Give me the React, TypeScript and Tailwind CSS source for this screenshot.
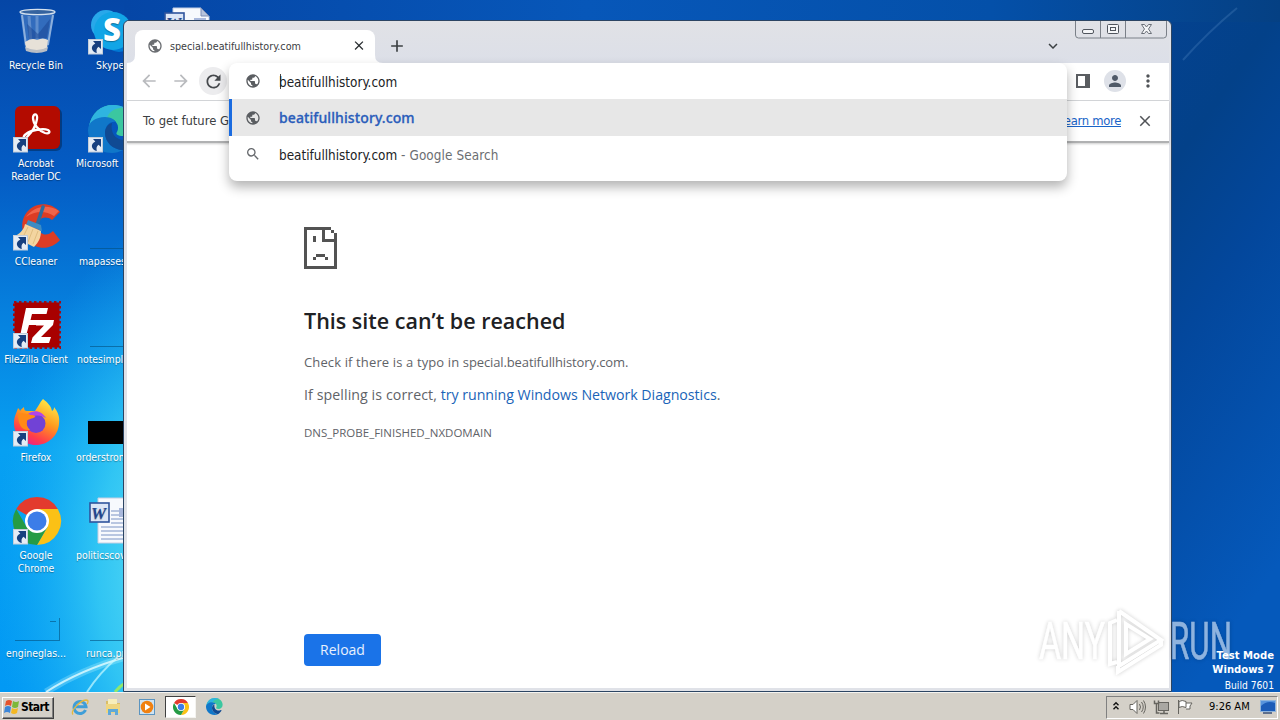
import type { ReactNode } from "react";
import {
  MdAdd,
  MdArrowBack,
  MdArrowForward,
  MdClose,
  MdExpandMore,
  MdMoreVert,
  MdPerson,
  MdPublic,
  MdRefresh,
  MdSearch,
} from "react-icons/md";

type IconProps = { children?: ReactNode; shortcut?: boolean };

/** 48px desktop icon with the optional shortcut arrow in the corner. */
function DeskIcon({ children, shortcut }: IconProps) {
  return (
    <svg viewBox="0 0 48 48" className="w-12 h-12 overflow-visible shrink-0">
      {children}
      {shortcut && (
        <g>
          <rect x="0.5" y="32.5" width="14" height="14.5" fill="#e4ecf5" stroke="#c3cdd9" />
          <path
            d="M5 34h8v8l-2.500-2.300c-2 1.700-2.300 3.200-1.700 6.300-5-1-7.300-6.500-1.500-9.500z"
            fill="#17407f"
          />
        </g>
      )}
    </svg>
  );
}

function RecycleBin() {
  return (
    <DeskIcon>
      <path d="M7 4 12 41q11 6 23 0l7-37z" fill="#5f8fd0" fillOpacity=".5" />
      <path d="M9 8l4 30M40 8l-5 30" stroke="#c8dcf2" strokeOpacity=".6" strokeWidth="2" />
      <path d="M16 9l2 26M24 9v24" stroke="#c8dcf2" strokeOpacity=".3" strokeWidth="3" />
      <path d="M14 17l11 10 12-15-3 19-18 1z" fill="#17428f" fillOpacity=".5" />
      <path d="M12 35q7-5 12-2 6-3 11 0l-1 8q-10 5-21 0z" fill="#e7e1d8" />
      <path d="M12 40q12 6 23 0l-1 4q-10 4-21 0z" fill="#b9bec5" />
      <ellipse cx="24.500" cy="5" rx="17.500" ry="2.600" fill="#35639f" stroke="#d6e2ee" strokeWidth="1.300" />
    </DeskIcon>
  );
}

function Acrobat() {
  return (
    <DeskIcon shortcut>
      <rect x="3" y="3" width="46" height="43" rx="6" fill="#000" opacity=".3" />
      <rect x="2" y="1" width="45" height="43" rx="6" fill="#b30b00" />
      <path
        d="M20 13c0-5 5-5 4 1-1 7-6 14-10 18-3 3-5 0-1-3 5-4 17-6 22-4 3 2 1 4-3 3-6-2-12-9-12-15z"
        fill="none"
        stroke="#fff"
        strokeWidth="2.300"
      />
    </DeskIcon>
  );
}

function CCleaner() {
  return (
    <DeskIcon shortcut>
      <path
        d="M47 9C36-3 19 0 12 12c-6 10-2 26 10 31 9 4 19 1 25-6l-7-9c-6 6-13 4-15-3-2-8 6-14 14-8z"
        fill="#dc3c24"
      />
      <path d="M13 14C20 4 34 0 46 8l-5 5c-9-6-19-5-28 1z" fill="#f0644a" />
      <path d="M30 4l-6 18" stroke="#2b6c9f" strokeWidth="3.500" strokeLinecap="round" />
      <path d="M15 17l13 5 1 6-16-6z" fill="#3c8cc4" />
      <path d="M12 21l16 7c0 6-2 11-7 16L1 34c5-3 10-7 11-13z" fill="#f3d5a0" />
      <path d="M15 24L9 36M20 26l-5 13M25 28l-5 13" stroke="#dfbd80" strokeWidth="1" />
    </DeskIcon>
  );
}

function FileZilla() {
  return (
    <DeskIcon shortcut>
      <rect x="1" y="1" width="46" height="46" fill="none" stroke="#a00a14" strokeWidth="2" strokeDasharray="2.500 2.500" />
      <rect x="1.500" y="1.500" width="45" height="45" fill="#a80000" />
      <path d="M13 7h22l-1.500 6H19l-1.500 6H30l-1.400 5H16l-3 11H7z" fill="#fff" />
      <path d="M24 19h17l-1 5-12 12h10l-2 6H18l1.500-5.500L31 24.500h-8z" fill="#fff" />
    </DeskIcon>
  );
}

function Firefox() {
  return (
    <DeskIcon shortcut>
      <defs>
        <linearGradient id="fox" x1=".8" y1="0" x2=".3" y2="1">
          <stop offset="0" stopColor="#fff04a" />
          <stop offset=".45" stopColor="#ff9a1e" />
          <stop offset=".8" stopColor="#ff3d4a" />
          <stop offset="1" stopColor="#e8208c" />
        </linearGradient>
      </defs>
      <path
        d="M30 0c5 4 8 7 9 12 2-1 2-3 2-4 4 5 6 10 5 17-1 12-11 21-23 21C10 46 1 36 1 24c0-7 3-11 4-15 1 1 2 2 2 3 1-2 3-3 4-4 0 3 1 4 3 4h8c3-4 5-9 8-12z"
        fill="url(#fox)"
      />
      <circle cx="23" cy="24.500" r="9.500" fill="#7142d6" />
      <path d="M15 15c6-5 14-3 18 4-5-3-9-3-14-2z" fill="#b244e8" />
      <path d="M5 15c5-2 10 0 13 1 3 0 5 1 4 2-3 2-7 2-8 4-1 3 0 6 3 9-8 1-12-5-12-16z" fill="#ff8a16" />
    </DeskIcon>
  );
}

function ChromeMark() {
  return (
    <>
      <path d="M24 24 3.200 12A24 24 0 0 1 44.800 12z" fill="#e33b2e" />
      <path d="M24 12h20.800A24 24 0 0 1 24 48L34.400 30z" fill="#fbc116" />
      <path d="M3.200 12A24 24 0 0 0 24 48l10.400-18H13.600z" fill="#259b45" />
      <circle cx="24" cy="24" r="12" fill="#fff" />
      <circle cx="24" cy="24" r="9.500" fill="#3c7de8" />
    </>
  );
}

function Skype() {
  return (
    <DeskIcon shortcut>
      <circle cx="18" cy="18" r="15" fill="#28a8ea" />
      <circle cx="31" cy="30" r="15" fill="#0078d4" />
      <circle cx="25" cy="24" r="19" fill="#12a5e6" />
      <text x="15" y="34" fontFamily="Open Sans, sans-serif" fontWeight="800" fontSize="31" fill="#fff">
        S
      </text>
    </DeskIcon>
  );
}

function EdgeMark() {
  return (
    <>
      <path d="M1 22C3 8 13 0 25 0c13 0 22 9 22 19 0 7-5 12-12 12-5 0-8-2-6-4 3-5 0-14-11-14C10 13 4 16 1 22z" fill="#3bc7a0" />
      <path d="M1 22C3 8 13 0 25 0c5 0 9 1 12 3-8-1-16 3-18 10C10 13 4 16 1 22z" fill="#2fb4e0" />
      <path d="M0 25c0-8 8-13 17-13 6 0 10 3 11 5-6-1-11 4-11 11 0 9 8 17 18 17-4 2-7 3-11 3C10 48 0 37 0 25z" fill="#1077c9" />
      <path d="M17 28c0-5 3-9 7-10-2 9 3 17 12 17 4 0 7-2 8-1-1 5-6 9-9 11-10 0-18-8-18-17z" fill="#104a93" />
    </>
  );
}

function WordDoc() {
  return (
    <DeskIcon>
      <path d="M10 1h28l8 8v37H10z" fill="#f7f9fd" stroke="#c4cee2" />
      <path d="M38 1v8h8z" fill="#b6c3dc" stroke="#7c8eb5" />
      <path d="M23 14h20M23 18h20M23 22h20M23 26h20M13 30h30M13 34h30M13 38h30M13 42h30" stroke="#7b93c4" />
      <rect x="31" y="11" width="12" height="9" fill="#a9b8dc" />
      <rect x="2" y="6" width="19" height="19" fill="#dbe5f6" stroke="#2f549d" strokeWidth="1.600" />
      <text x="3" y="21.500" fontFamily="Liberation Serif, serif" fontWeight="bold" fontStyle="italic" fontSize="17" fill="#21458f">
        W
      </text>
    </DeskIcon>
  );
}

function BlankFile({ corner }: { corner?: boolean }) {
  return (
    <DeskIcon>
      <path d="M2 45.500h45" stroke="#04507f" strokeOpacity=".6" />
      {corner && <path d="M46.500 23v22M37 26.500h6" stroke="#04507f" strokeOpacity=".6" />}
    </DeskIcon>
  );
}

const firstColumn = [
  { label: "Recycle Bin", icon: <RecycleBin /> },
  { label: "Acrobat Reader DC", icon: <Acrobat /> },
  { label: "CCleaner", icon: <CCleaner /> },
  { label: "FileZilla Client", icon: <FileZilla /> },
  { label: "Firefox", icon: <Firefox /> },
  { label: "Google Chrome", icon: <DeskIcon shortcut><ChromeMark /></DeskIcon> },
  { label: "engineglas...", icon: <BlankFile corner /> },
];

const secondColumn = [
  { label: "Skype", pad: "pl-[21px]", icon: <Skype /> },
  { label: "Microsoft", pad: "pl-[1px]", icon: <DeskIcon shortcut><EdgeMark /></DeskIcon> },
  { label: "mapasses", pad: "pl-1", icon: <BlankFile /> },
  { label: "notesimpl", pad: "pl-0.5", icon: <BlankFile /> },
  {
    label: "orderstrom",
    pad: "pl-[1px]",
    icon: (
      <DeskIcon>
        <rect y="22" width="48" height="23" fill="#000" />
      </DeskIcon>
    ),
  },
  { label: "politicscov", pad: "pl-[1px]", icon: <WordDoc /> },
  { label: "runca.png", pad: "pl-[11px]", icon: <BlankFile /> },
];

function Wallpaper() {
  return (
    <svg viewBox="0 0 1280 692" preserveAspectRatio="none" className="absolute inset-0 w-full h-full">
      <defs>
        <linearGradient id="sky" x1="0" y1="0" x2="0" y2="1">
          <stop offset="0" stopColor="#0546a6" />
          <stop offset=".25" stopColor="#045cc4" />
          <stop offset=".45" stopColor="#0680de" />
          <stop offset=".65" stopColor="#07a0f2" />
          <stop offset="1" stopColor="#0299f4" />
        </linearGradient>
        <radialGradient id="glow" gradientUnits="userSpaceOnUse" cx="200" cy="570" r="360" gradientTransform="translate(200 570) scale(.57 1) translate(-200 -570)">
          <stop offset="0" stopColor="#7cf0f4" stopOpacity=".95" />
          <stop offset=".5" stopColor="#3fd2f4" stopOpacity=".75" />
          <stop offset="1" stopColor="#18b0f4" stopOpacity="0" />
        </radialGradient>
        <linearGradient id="east" x1="0" y1="0" x2=".25" y2="1">
          <stop offset="0" stopColor="#044291" />
          <stop offset=".25" stopColor="#034189" />
          <stop offset=".5" stopColor="#03479c" />
          <stop offset="1" stopColor="#0559bb" />
        </linearGradient>
        <linearGradient id="top" x1="0" y1="0" x2="1" y2="0">
          <stop offset="0" stopColor="#0546a6" />
          <stop offset=".4" stopColor="#0757b9" />
          <stop offset=".75" stopColor="#0450a9" />
          <stop offset="1" stopColor="#054083" />
        </linearGradient>
      </defs>
      <rect width="1280" height="692" fill="url(#sky)" />
      <rect width="500" height="692" fill="url(#glow)" />
      <rect x="1160" width="120" height="692" fill="url(#east)" />
      <rect x="124" width="1156" height="22" fill="url(#top)" />
      <path d="M1183 60Q1208 32 1237 8" fill="none" stroke="#7fb0e0" strokeOpacity=".2" strokeWidth="2" />
      <path d="M46 692Q80 670 126 657" fill="none" stroke="#b8f6ff" strokeOpacity=".3" strokeWidth="7" />
      <path d="M46 692Q80 670 126 657" fill="none" stroke="#e4fcff" strokeOpacity=".8" strokeWidth="2" />
      <path d="M87 692Q100 672 118 657" fill="none" stroke="#c8f9ff" strokeOpacity=".7" strokeWidth="2" />
      <path d="M115 692q5-6 10-9" fill="none" stroke="#8fe86c" strokeWidth="3" />
    </svg>
  );
}

/* "sad page" bitmap, one unit per pixel */
function SadPage() {
  return (
    <svg viewBox="0 0 11 14" shapeRendering="crispEdges" className="w-[33px] h-[42px]" fill="#535353">
      <path d="M0 0h9v1H1v12h9V5H6V1h1v3h3V2h1v12H0zM9 1h1v1H9zM3 3h1v2H3zM4 9h3v1H4zM3 10h1v1H3zM7 10h1v1H7z" />
    </svg>
  );
}

function CaptionButtons() {
  return (
    <svg viewBox="0 0 94 19" className="absolute right-[3px] top-0 w-[94px] h-[19px]" fill="none" stroke="#7b8088">
      <path d="M1.500 0v14q0 3 3 3h85q3 0 3-3V0M26.500 0v17M51.500 0v17" />
      <rect x="8.500" y="8.500" width="11" height="4" rx="1.500" fill="#f5f6f8" stroke="#50555d" />
      <rect x="33.500" y="3.500" width="11" height="9" rx="1" fill="#f5f6f8" stroke="#50555d" />
      <rect x="36.500" y="6.500" width="5" height="3" stroke="#50555d" />
      <path d="M67.500 3.500h3l2 2.500 2-2.500h3l-3 4.500 3 4.500h-3l-2-2.500-2 2.500h-3l3-4.500z" fill="#f5f6f8" stroke="#6b7078" />
    </svg>
  );
}

function TabStrip() {
  return (
    <div className="h-[42px] flex items-end bg-gradient-to-b from-[#e1e2e6] to-[#dcdfe8] pl-[8px]">
      <div className="relative w-[240px] h-[33px] bg-white rounded-t-lg flex items-center pl-[12px] pr-[8px]">
        <svg viewBox="0 0 8 8" className="absolute -left-2 bottom-0 w-2 h-2">
          <path d="M8 0v8H0q8 0 8-8z" fill="#fff" />
        </svg>
        <svg viewBox="0 0 8 8" className="absolute -right-2 bottom-0 w-2 h-2">
          <path d="M0 0v8h8Q0 8 0 0z" fill="#fff" />
        </svg>
        <MdPublic className="mb-0.5 w-4 h-4 text-[#6b6e72]" />
        <span className="ml-[7px] pt-px text-[10.700px] text-[#3c4043] whitespace-nowrap">
          special.beatifullhistory.com
        </span>
        <MdClose className="mb-0.5 ml-auto w-4 h-[15px] text-[#2c3033]" />
      </div>
      <div className="flex-1 h-[33px] flex items-center pb-0.5">
        <MdAdd className="ml-[12px] w-5 h-5 text-[#3c4043]" />
        <MdExpandMore className="ml-auto mr-[107px] w-[18px] h-[18px] text-[#3c4043]" />
      </div>
    </div>
  );
}

function Toolbar() {
  return (
    <div className="h-[38px] flex items-center border-b border-[#d5d7da] pl-[12px] pr-[12px] pb-px">
      <MdArrowBack className="w-5 h-5 text-[#b9bbbe]" />
      <MdArrowForward className="ml-[12px] w-5 h-5 text-[#b9bbbe]" />
      <div className="ml-2 w-7 h-7 rounded-full bg-[#ececee] flex items-center justify-center">
        <MdRefresh className="w-[21px] h-[21px] text-[#46494d]" />
      </div>
      <div className="ml-auto w-[14px] h-[14px] border-2 border-r-[5px] border-[#5a5d61]" />
      <div className="ml-[14px] w-[22px] h-[22px] rounded-full bg-[#dee1e8] flex items-center justify-center">
        <MdPerson className="w-[18px] h-[18px] text-[#505a68]" />
      </div>
      <MdMoreVert className="ml-[12px] -mr-px w-5 h-5 text-[#505357]" />
    </div>
  );
}

function InfoBar() {
  return (
    <div className="h-[42px] flex items-center border-b-2 border-[#b0b1b2] shadow-[0_1px_2px_rgba(0,0,0,0.2)] pl-[16px] pr-[15px] pb-px text-[12.900px] text-[#3c4043]">
      <span className="whitespace-nowrap">To get future G</span>
      <a className="ml-auto text-[#1a64c8] underline tracking-[-0.3px]">Learn more</a>
      <MdClose className="ml-[15px] w-[18px] h-[18px] text-[#505357]" />
    </div>
  );
}

function Omnibox() {
  return (
    <div className="absolute left-[105px] top-[42px] w-[838px] h-[118px] bg-white rounded-lg shadow-[0_6px_12px_rgba(0,0,0,0.3)] overflow-hidden text-[13.400px] leading-4 text-[#202124]">
      <div className="h-9 flex items-center pl-[16px]">
        <MdPublic className="w-4 h-4 text-[#5a5d61]" />
        <span className="ml-[19px] mt-px h-[15px] w-px -mr-[2px] bg-[#444]" />
        <span className="pt-[3px]">beatifullhistory.com</span>
      </div>
      <div className="h-[37px] flex items-center bg-[#e7e7e7] border-l-[3px] border-[#1a6be0] pl-[13px]">
        <MdPublic className="w-4 h-4 text-[#5a5d61]" />
        <span className="ml-[18px] font-['Noto_Sans'] text-[14px] font-medium tracking-[0.1px] text-[#2a5dbb] [-webkit-text-stroke:0.3px_#2a5dbb]">
          beatifullhistory.com
        </span>
      </div>
      <div className="h-[37px] flex items-center pl-[16px]">
        <MdSearch className="mb-0.5 w-4 h-4 text-[#66696d]" />
        <span className="ml-[18px] pt-[3px] whitespace-pre">
          beatifullhistory.com
          <span className="tracking-[0.1px] text-[#6b6e72]"> - Google Search</span>
        </span>
      </div>
    </div>
  );
}

function ErrorPage() {
  return (
    <div className="flex-1 pl-[177px] pt-[84px] flex flex-col items-start font-['Open_Sans'] text-[#5f6368]">
      <SadPage />
      <h1 className="mt-[37px] text-[21.500px] leading-[30px] font-semibold text-[#202124]">
        This site can’t be reached
      </h1>
      <p className="mt-[16px] text-[13px] leading-5">
        <span className="tracking-[0.130px]">Check if there is a typo in </span>
        <span className="tracking-[-0.120px]">special.beatifullhistory.com.</span>
      </p>
      <p className="mt-[13px] text-[14.200px] leading-5">
        <span className="tracking-[0.080px]">If spelling is correct, </span>
        <a className="tracking-[-0.030px] text-[#1a64b8]">
          try running Windows Network Diagnostics
        </a>
        .
      </p>
      <p className="mt-[18px] text-[11.500px] leading-5">DNS_PROBE_FINISHED_NXDOMAIN</p>
      <button className="mt-[191px] w-[77px] h-8 rounded bg-[#1a73e8] pb-0.5 text-[14px] text-white/90">
        Reload
      </button>
    </div>
  );
}

function BrowserWindow() {
  return (
    <div className="absolute left-[123px] top-[20px] w-[1049px] h-[672px] rounded-t-md border border-[#2c4563] bg-[#e0e2e8] pl-[3px] pr-[2px] pb-[3px] flex flex-col overflow-hidden">
      <TabStrip />
      <div className="flex-1 bg-white flex flex-col">
        <Toolbar />
        <InfoBar />
        <ErrorPage />
      </div>
      <CaptionButtons />
      <Omnibox />
    </div>
  );
}

function Watermark() {
  return (
    <svg
      viewBox="0 0 204 76"
      className="absolute left-[1034px] top-[602px] w-[204px] h-[76px] overflow-visible drop-shadow-[0_0_2px_rgba(0,0,0,0.35)] opacity-55"
      fill="#fff"
      stroke="#fff"
      strokeWidth=".6"
      fontFamily="Roboto, sans-serif"
      fontSize="51"
    >
      <text x="5" y="57" textLength="66" lengthAdjust="spacingAndGlyphs">ANY</text>
      <text x="136" y="57" textLength="62" lengthAdjust="spacingAndGlyphs">RUN</text>
      <g fill="none" stroke="#fff" strokeWidth="4">
        <path d="M83 18 76 21v41l7-2" />
        <path d="M85 9v55l42-26L85 9M92 22v30l24-15z" />
        <path d="M84 64v6l43-27v-5" />
      </g>
    </svg>
  );
}

function Taskbar() {
  return (
    <div className="h-7 bg-[#d4d0c8] border-t border-[#f4f3f0] flex items-center pl-[2px] pr-[2px] font-['DejaVu_Sans_Condensed']">
      <button className="mt-[2px] w-[52px] h-[22px] bg-[#d4d0c8] border border-t-white border-l-white border-b-[#404040] border-r-[#404040] shadow-[inset_-1px_-1px_#808080] flex items-center pl-[1px] pb-px text-[12px] font-bold tracking-[-0.600px] text-black">
        <svg viewBox="0 0 16 16" className="w-4 h-4 mr-[1px] shrink-0">
          <path d="M2 2q3-2 6 0L7 7Q4 5 1 7z" fill="#e5532d" />
          <path d="M9 2q3 2 6 0l-1 6q-3 2-6 0z" fill="#7db83a" />
          <path d="M1 8q3-2 6 0l-1 6q-3-2-6 0z" fill="#3d86d8" />
          <path d="M8 9q3 2 6 0l-1 5q-3 2-6 0z" fill="#f4b824" />
        </svg>
        Start
      </button>
      <svg viewBox="0 0 18 18" className="ml-[17px] w-[18px] h-[18px]">
        <path d="M14.500 12A6 6 0 1 1 15 8.800H5" fill="none" stroke="#3f9ed8" strokeWidth="3" />
        <path d="M2 16.500C-1 13 9 2.500 15 2c3 0 2 3 1 4" fill="none" stroke="#e6b83c" strokeWidth="1.300" />
      </svg>
      <svg viewBox="0 0 18 18" className="ml-[15px] w-[18px] h-[18px]">
        <path d="M2 3h6l1 2h7v10H2z" fill="#d9bd68" />
        <path d="M4 1h9v6H4z" fill="#f7eebb" />
        <path d="M2 6h14v9H2z" fill="#efd681" />
        <path d="M4 17v-6h10v6h-3v-3H7v3z" fill="#5fa9d8" />
      </svg>
      <svg viewBox="0 0 18 18" className="ml-[16px] w-[18px] h-[18px]">
        <rect x="1.500" y="1.500" width="15" height="15" fill="#cfe3f2" stroke="#5b94c0" />
        <circle cx="9" cy="9" r="6.300" fill="#f08010" />
        <path d="M7 5.500v7L12.500 9z" fill="#fff" />
      </svg>
      <div className="mt-[1px] ml-[9px] w-[31px] h-[22px] bg-white border border-t-[#404040] border-l-[#404040] border-r-[#f4f3f0] border-b-[#f4f3f0] flex items-center justify-center">
        <svg viewBox="0 0 48 48" className="w-4 h-4"><ChromeMark /></svg>
      </div>
      <svg viewBox="0 0 48 48" className="ml-[10px] w-[17px] h-[17px]"><EdgeMark /></svg>

      <div className="ml-auto mt-[1px] w-[172px] h-[23px] border border-t-[#808080] border-l-[#808080] border-b-white border-r-white flex items-center pl-[5px]">
        <svg viewBox="0 0 8 10" className="mb-0.5 w-2 h-[10px]" fill="none" stroke="#111" strokeWidth="1.400">
          <path d="M1.500 4.200 4 1.700l2.500 2.500M1.500 8.200 4 5.700l2.500 2.500" />
        </svg>
        <svg viewBox="0 0 17 16" className="ml-[9px] w-[17px] h-4" fill="none" stroke="#66645f">
          <path d="M1 5.500h3l4-4v13l-4-4H1z" fill="#fff" />
          <path d="M10.500 5q2 3 0 6M12.500 3q3.500 5 0 10M14.500 1.500q4 6.500 0 13" />
        </svg>
        <svg viewBox="0 0 17 16" className="ml-[7px] w-[17px] h-4" fill="none" stroke="#66645f">
          <rect x="5.500" y="3.500" width="10" height="8" fill="#a9a7a2" />
          <path d="M7 14.500h8M11 12v2" strokeWidth="1.500" />
          <path d="M1.500 1.500v3h4v-3M3.500 5v9h3" strokeWidth="1.500" />
        </svg>
        <svg viewBox="0 0 17 16" className="ml-[7px] w-[17px] h-4" fill="#fff" stroke="#66645f">
          <path d="M1.500 1v14M2 2.500q3-2 7 0v6q-4-2-7 0zM9 4h6l-2 3v3H9" />
        </svg>
        <span className="ml-[15px] text-[11px] whitespace-nowrap text-black">9:26 AM</span>
        <svg viewBox="0 0 16 14" className="ml-[10px] w-4 h-[14px] shrink-0">
          <rect x=".5" y=".5" width="15" height="11" fill="#1c5cb8" stroke="#8fb4dc" />
          <path d="M1 6q6-6 14-3V1H1z" fill="#5793dc" />
          <path d="M3 13h9" stroke="#39507a" strokeWidth="1.500" />
        </svg>
      </div>
    </div>
  );
}

export default function App() {
  return (
    <main className="w-[1280px] h-[720px] overflow-hidden flex flex-col font-['DejaVu_Sans_Condensed']">
      <div className="relative flex-1 overflow-hidden">
        <Wallpaper />
        <div className="relative flex text-[10.400px] leading-[13px] text-white [text-shadow:0_1px_1px_rgba(0,0,0,0.35)]">
          <div className="w-[75px]">
            {firstColumn.map((item) => (
              <div key={item.label} className="h-[98px] pt-[7px]">
                <div className="pl-[13px]">{item.icon}</div>
                <div className="mt-1 w-[72px] px-1 text-center">
                  {item.label.startsWith("FileZilla") ? (
                    <span className="-mx-2 whitespace-nowrap tracking-[-0.120px]">{item.label}</span>
                  ) : (
                    item.label
                  )}
                </div>
              </div>
            ))}
          </div>
          <div className="w-[75px]">
            {secondColumn.map((item) => (
              <div key={item.label} className="h-[98px] pt-[7px]">
                <div className="pl-[13px]">{item.icon}</div>
                <div className={`mt-1 whitespace-nowrap ${item.pad}`}>{item.label}</div>
              </div>
            ))}
          </div>
          <div className="pt-[7px] pl-[13px]">
            <WordDoc />
          </div>
        </div>
        <BrowserWindow />
        <Watermark />
        <div className="absolute right-[6px] top-[649px] text-right text-white text-[11.200px] leading-[14px] font-bold">
          <p>Test Mode</p>
          <p>Windows 7</p>
          <p className="mt-[2px] text-[10.200px] font-normal">Build 7601</p>
        </div>
      </div>
      <Taskbar />
    </main>
  );
}
